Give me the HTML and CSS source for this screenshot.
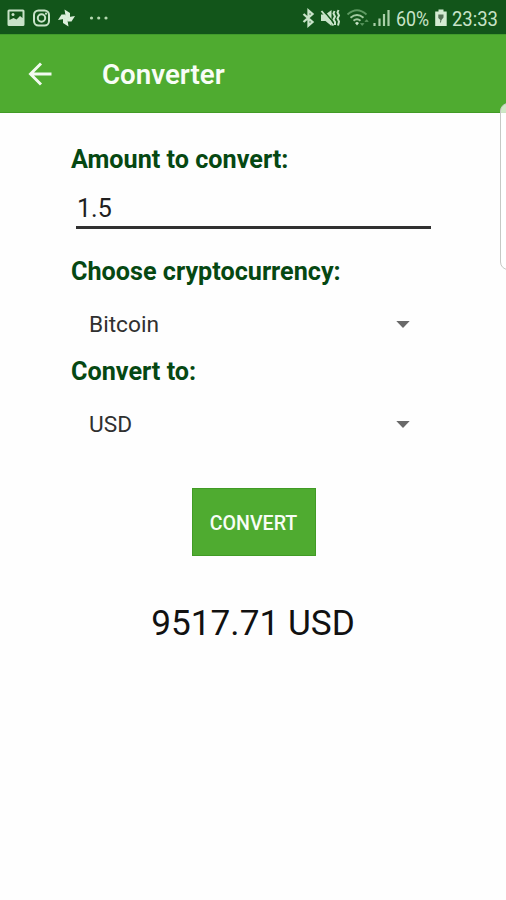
FILE: index.html
```html
<!DOCTYPE html>
<html lang="en">
<head>
<meta charset="utf-8">
<title>Converter</title>
<link rel="stylesheet" href="styles.css">
</head>
<body>
<div class="status">
  <svg class="icons-left" width="120" height="34" viewBox="0 0 120 34" fill="none" stroke="#c8e3c8">
    <path fill="#c8e3c8" stroke="none" fill-rule="evenodd" d="M9 9.500h14a1.500 1.500 0 0 1 1.500 1.500v13.500a1.500 1.500 0 0 1-1.500 1.500H9A1.500 1.500 0 0 1 7.500 24.500V11A1.500 1.500 0 0 1 9 9.500zM9.500 11.500V20l4-2 3 1.500 3.500-3.500 2.500 2v-6.500z"/>
    <circle cx="13" cy="14.500" r="1.500" fill="#c8e3c8" stroke="none"/>
    <rect x="34" y="10.500" width="15" height="15" rx="4.500" stroke-width="2"/>
    <circle cx="41.500" cy="18" r="3.700" stroke-width="2"/>
    <circle cx="46" cy="13.700" r="1.100" fill="#c8e3c8" stroke="none"/>
    <g fill="#dcefdc" stroke="none">
      <path d="M66 18.500L64.500 9.500l5.500 3.500v4z"/>
      <path d="M66 18.500L64.500 9.500l5.500 3.500v4z" transform="rotate(90 66.500 18)"/>
      <path d="M66 18.500L64.500 9.500l5.500 3.500v4z" transform="rotate(180 66.500 18)"/>
      <path d="M66 18.500L64.500 9.500l5.500 3.500v4z" transform="rotate(270 66.500 18)"/>
    </g>
    <g fill="#b4d8b0" stroke="none"><circle cx="91.500" cy="18" r="1.600"/><circle cx="98.700" cy="18" r="1.600"/><circle cx="106" cy="18" r="1.600"/></g>
  </svg>
  <div class="status-right">
    <svg width="95" height="34" viewBox="300 0 95 34" fill="none" stroke="#c8e3c8">
      <path d="M303.500 14l9 8-4 3.500v-15l4 3.500-9 8" stroke-width="2.300"/>
      <path d="M321 14.500h4.500l6-4.500v16l-6-5H321z" fill="#c8e3c8" stroke="none"/>
      <path d="M322.500 9.500l11 13" stroke="#12551a" stroke-width="1.500"/>
      <path d="M321.500 11l12 14.500" stroke-width="1.900"/>
      <path d="M334.500 11l-1 2.500 1.500 3-1.500 3 1.500 2.500v3M338.500 10l-1 2.500 1.500 3-1.500 3 1.500 3-1 4" stroke-width="2"/>
      <path d="M347.500 14.500q9.500-8.500 19 0" stroke="#5d9961" stroke-width="1.800"/>
      <path d="M350.500 17.700q6.500-5.500 13 0M353.500 20.800q3.500-3 7 0" stroke="#a0c99f" stroke-width="1.900"/>
      <path d="M355 23l2-1.200 2 1.200-2 2.500z" fill="#c8e3c8" stroke="none"/>
      <path d="M360.500 23.500l1.700 2 1.700-2zM365 21.500l1.600-1.800 1.600 1.800z" fill="#5d9961" stroke="#5d9961" stroke-width=".7"/>
      <path d="M374.500 26v-3M379.500 26v-7.500M384 26v-12M388.500 26V10" stroke="#a9cfa8" stroke-width="2.200"/>
    </svg>
    <span class="status-text percent">60%</span>
    <svg class="battery" width="12" height="34" viewBox="435 0 12 34">
      <path d="M438.500 9.500h5V11.500h3.200v14.500h-11.500V11.500h3.300z" fill="#d4ebd2"/>
      <path d="M438.300 14.500h5.200v3l-2 2.500-.6 2.500h-1l.5-2.500-2.100-2z" fill="#557257"/>
    </svg>
    <span class="status-text clock">23:33</span>
  </div>
</div>
<header class="appbar">
  <svg class="back" width="26" height="26" viewBox="0 0 26 26" fill="none" stroke="#f2faef" stroke-width="2.900"><path d="M25.500 13H4.500M15 2.500L4.500 13 15 23.500"/></svg>
  <h1 class="title">Converter</h1>
</header>
<main class="form">
  <label class="label amount-label" for="amount">Amount to convert:</label>
  <div class="amount" id="amount">1.5</div>
  <div class="label crypto-label">Choose cryptocurrency:</div>
  <div class="select"><span>Bitcoin</span><svg width="14" height="8" viewBox="0 0 14 8"><path d="M.3 0h13.400L7 7z" fill="#696969"/></svg></div>
  <div class="label to-label">Convert to:</div>
  <div class="select"><span>USD</span><svg width="14" height="8" viewBox="0 0 14 8"><path d="M.3 0h13.400L7 7z" fill="#696969"/></svg></div>
  <button class="convert">CONVERT</button>
  <div class="result">9517.71 USD</div>
</main>
<div class="edge-handle"></div>
</body>
</html>
```

FILE: styles.css
```css
* { box-sizing: border-box; }
body {
  margin: 0;
  height: 900px;
  overflow: hidden;
  position: relative;
  background: #fefefe;
  font-family: Roboto, sans-serif;
  color: #202020;
}
.status {
  height: 34px;
  display: flex;
  justify-content: space-between;
  background: #12551a;
}
.status svg { display: block; flex: none; }
.status-right { display: flex; width: 206px; }
.status-text {
  display: block;
  height: 34px;
  font-size: 20.5px;
  line-height: 38px;
  color: #c8e3c8;
  white-space: nowrap;
  transform-origin: left center;
}
.percent { width: 40px; margin-left: 1px; transform: scaleX(.87); }
.battery { margin-left: -1px; }
.clock { margin-left: 5px; transform: scaleX(.9); }
.appbar {
  height: 79px;
  display: flex;
  align-items: center;
  padding-left: 26px;
  background: #4fab30;
  border-top: 1px solid #419b2b;
  border-bottom: 1px solid #419b25;
}
.back { flex: none; }
.title {
  margin: 2px 0 0 50px;
  font-size: 27.7px;
  font-weight: 600;
  line-height: 32px;
  color: #f8fdf6;
}
.form {
  display: flex;
  flex-direction: column;
  padding: 31px 71px 0;
}
.label {
  height: 32px;
  font-size: 25.2px;
  line-height: 32px;
  font-weight: 700;
  color: #064812;
  white-space: nowrap;
}
.amount {
  height: 41px;
  margin: 12px 4px 0 5px;
  padding-left: 1px;
  font-size: 25px;
  line-height: 41px;
  border-bottom: 3px solid #303030;
}
.crypto-label { margin-top: 27px; }
.select {
  height: 32px;
  display: flex;
  align-items: center;
  justify-content: space-between;
  margin: 21px 25px 0 18px;
  font-size: 22.7px;
  line-height: 32px;
  color: #303030;
}
.to-label { margin-top: 15px; }
.convert {
  align-self: center;
  width: 124px;
  height: 68px;
  margin: 47px 0 0 1px;
  padding: 2px 0 0;
  border: 1px solid #419b25;
  background: #4fab30;
  color: #f8fdf6;
  font: 500 19.6px/66px Roboto, sans-serif;
}
.result {
  margin-top: 44px;
  text-align: center;
  font-size: 35.2px;
  line-height: 47px;
  color: #111;
  white-space: nowrap;
}
.edge-handle {
  position: absolute;
  left: 500px;
  top: 103px;
  width: 20px;
  height: 167px;
  border: 1px solid #c6c9c5;
  border-radius: 8px;
  background: rgba(255, 255, 255, .72);
}
```
